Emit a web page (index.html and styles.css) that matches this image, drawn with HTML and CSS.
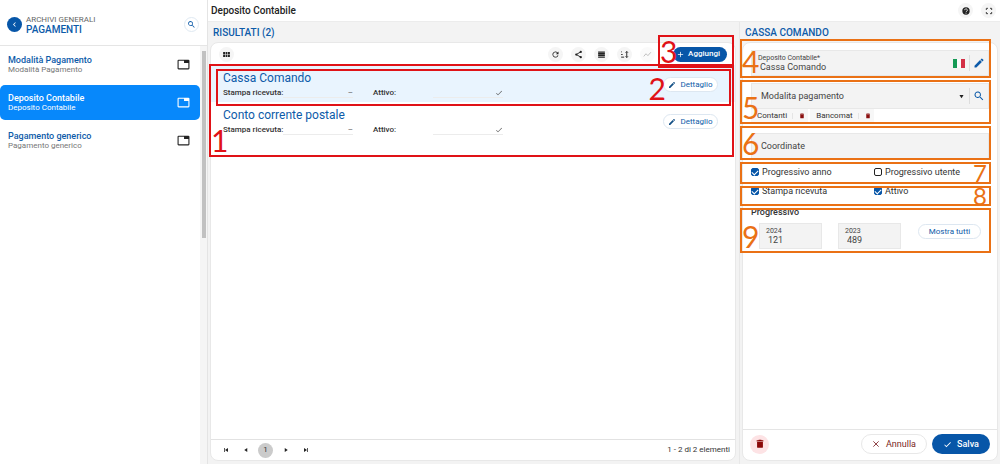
FILE: index.html
```
<!DOCTYPE html>
<html lang="it">
<head>
<meta charset="utf-8">
<title>Deposito Contabile</title>
<link rel="stylesheet" href="styles.css">
</head>
<body>
<svg class="defs" aria-hidden="true">
  <symbol id="search" viewBox="0 0 24 24"><path d="M15.5 14h-.8l-.3-.3A6.5 6.5 0 1 0 13.700 14.400l.3.300v.8l5 5 1.500-1.500zM9.500 14a4.500 4.500 0 1 1 0-9 4.500 4.500 0 0 1 0 9z"/></symbol>
  <symbol id="tab" viewBox="0 0 24 24"><path d="M21 3H3a2 2 0 0 0-2 2v14c0 1.100.9 2 2 2h18a2 2 0 0 0 2-2V5a2 2 0 0 0-2-2zm0 16H3V5h10v4h8z"/></symbol>
  <symbol id="pencil" viewBox="0 0 24 24"><path d="M3 17.250V21h3.750L17.800 9.900l-3.700-3.700zM20.700 7a1 1 0 0 0 0-1.400l-2.300-2.300a1 1 0 0 0-1.400 0l-1.900 1.800 3.800 3.800z"/></symbol>
  <symbol id="trash" viewBox="0 0 24 24"><path d="M5 7h14v12a2 2 0 0 1-2 2H7a2 2 0 0 1-2-2zM4 3h4l1-1h6l1 1h4v3H4z"/></symbol>
  <symbol id="check" viewBox="0 0 24 24"><path d="M9 16.200 4.800 12l-1.400 1.400L9 19 21 7l-1.400-1.400z"/></symbol>
</svg>
<div class="app">
  <aside class="sidebar">
    <header class="side-head">
      <button class="back" aria-label="Indietro"><svg viewBox="0 0 24 24"><path d="M15.400 7.400 14 6l-6 6 6 6 1.400-1.400L10.800 12z"/></svg></button>
      <div class="side-title"><span>ARCHIVI GENERALI</span><strong>PAGAMENTI</strong></div>
      <button class="round outlined" aria-label="Cerca"><svg><use href="#search"/></svg></button>
    </header>
    <div class="side-body">
      <nav class="menu">
        <a href="#modalita" class="item"><span><strong>Modalità Pagamento</strong><small>Modalità Pagamento</small></span><svg><use href="#tab"/></svg></a>
        <a href="#deposito" class="item active"><span><strong>Deposito Contabile</strong><small>Deposito Contabile</small></span><svg><use href="#tab"/></svg></a>
        <a href="#generico" class="item"><span><strong>Pagamento generico</strong><small>Pagamento generico</small></span><svg><use href="#tab"/></svg></a>
      </nav>
      <div class="scrollbar"><i class="thumb"></i></div>
    </div>
  </aside>
  <main class="main">
    <header class="topbar">
      <h1>Deposito Contabile</h1>
      <button class="round" aria-label="Aiuto"><svg viewBox="0 0 24 24"><circle cx="12" cy="12" r="11"/><path class="cut" d="M8 9.500a4 4 0 1 1 6.500 3.100C13 13.700 12 14 12 15.500M12 17.500v2.500"/></svg></button>
      <button class="round" aria-label="Schermo intero"><svg viewBox="0 0 24 24"><path class="line" d="M4 9V4h5M15 4h5v5M20 15v5h-5M9 20H4v-5"/></svg></button>
    </header>
    <div class="columns">
      <section class="results">
        <h2>RISULTATI (2)</h2>
        <div class="card">
          <div class="toolbar">
            <button class="round grid-view" aria-label="Griglia"><svg viewBox="0 0 24 24"><path d="M3 5h5v6H3zM9.500 5h5v6h-5zM16 5h5v6h-5zM3 12.500h5v6H3zM9.500 12.500h5v6h-5zM16 12.500h5v6h-5z"/></svg></button>
            <button class="round" aria-label="Aggiorna"><svg viewBox="0 0 24 24"><path d="M17.650 6.350A8 8 0 1 0 19.730 14h-2.080A6 6 0 1 1 12 6c1.660 0 3.140.690 4.220 1.780L13 11h7V4z"/></svg></button>
            <button class="round" aria-label="Condividi"><svg viewBox="0 0 24 24"><path class="line" d="M18 5 6 12l12 7"/><circle cx="18" cy="5" r="3"/><circle cx="6" cy="12" r="3"/><circle cx="18" cy="19" r="3"/></svg></button>
            <button class="round" aria-label="Elenco"><svg viewBox="0 0 24 24"><path d="M3 4h18v3.500H3zM3 8.300h18v3.500H3zM3 12.600h18v3.500H3zM3 17h18v3.500H3z"/></svg></button>
            <button class="round" aria-label="Ordina"><svg viewBox="0 0 24 24"><path class="line" d="M18 4v16M15 7l3-3 3 3M15 17l3 3 3-3M3 5h2M3 12h4M3 19h8"/></svg></button>
            <button class="round faded" aria-label="Grafico"><svg viewBox="0 0 24 24"><path class="line" d="m2 17 6-7 5 5 8-9"/></svg></button>
            <div class="marked">
              <button class="add"><svg viewBox="0 0 24 24"><path class="line" d="M12 3v18M3 12h18"/></svg>Aggiungi</button>
              <span class="mark mark-add">3</span>
            </div>
          </div>
          <div class="list">
            <article class="row selected">
              <div class="row-main"><h3>Cassa Comando</h3>
                <dl><dt>Stampa ricevuta:</dt><dd>–</dd><dt>Attivo:</dt><dd><svg><use href="#check"/></svg></dd></dl></div>
              <button class="pill"><svg><use href="#pencil"/></svg>Dettaglio</button>
              <span class="mark mark-row">2</span>
            </article>
            <article class="row">
              <div class="row-main"><h3>Conto corrente postale</h3>
                <dl><dt>Stampa ricevuta:</dt><dd>–</dd><dt>Attivo:</dt><dd><svg><use href="#check"/></svg></dd></dl></div>
              <button class="pill"><svg><use href="#pencil"/></svg>Dettaglio</button>
            </article>
            <span class="mark mark-list">1</span>
          </div>
          <footer class="pager">
            <button aria-label="Prima pagina"><svg viewBox="0 0 24 24"><path d="M4 4h3v16H4zM20 4v16L8 12z"/></svg></button>
            <button aria-label="Pagina precedente"><svg viewBox="0 0 24 24"><path d="M17 4v16L5 12z"/></svg></button>
            <button class="current">1</button>
            <button aria-label="Pagina successiva"><svg viewBox="0 0 24 24"><path d="M7 4v16l12-8z"/></svg></button>
            <button aria-label="Ultima pagina"><svg viewBox="0 0 24 24"><path d="M4 4v16l12-8zM17 4h3v16h-3z"/></svg></button>
            <span class="count">1 - 2 di 2 elementi</span>
          </footer>
        </div>
      </section>
      <section class="detail">
        <h2>CASSA COMANDO</h2>
        <form class="card">
          <div class="fields">
            <div class="group g-name">
              <div class="field">
                <div class="stack"><label for="name">Deposito Contabile*</label><input id="name" value="Cassa Comando"></div>
                <svg class="flag" viewBox="0 0 12 9"><path fill="#159a55" d="M0 0h4v9H0z"/><path fill="#fafafa" d="M4 0h4v9H4z"/><path fill="#d32f45" d="M8 0h4v9H8z"/></svg>
                <button type="button" class="tool" aria-label="Modifica"><svg><use href="#pencil"/></svg></button>
              </div>
              <span class="mark orange">4</span>
            </div>
            <div class="group g-mode">
              <div class="field">
                <select aria-label="Modalita pagamento"><option>Modalita pagamento</option></select>
                <svg class="caret" viewBox="0 0 24 24"><path d="M2 5h20L12 20z"/></svg>
                <button type="button" class="tool" aria-label="Cerca"><svg><use href="#search"/></svg></button>
              </div>
              <div class="chips">
                <span class="chip">Contanti<button type="button" aria-label="Rimuovi Contanti"><svg><use href="#trash"/></svg></button></span>
                <span class="chip">Bancomat<button type="button" aria-label="Rimuovi Bancomat"><svg><use href="#trash"/></svg></button></span>
              </div>
              <span class="mark orange">5</span>
            </div>
            <div class="group g-coord">
              <div class="field"><input aria-label="Coordinate" placeholder="Coordinate"></div>
              <span class="mark orange">6</span>
            </div>
            <div class="group checks">
              <label><input type="checkbox" checked>Progressivo anno</label>
              <label><input type="checkbox">Progressivo utente</label>
              <span class="mark orange right">7</span>
            </div>
            <div class="group checks flags">
              <label><input type="checkbox" checked>Stampa ricevuta</label>
              <label><input type="checkbox" checked>Attivo</label>
              <span class="mark orange right">8</span>
            </div>
            <div class="group g-prog">
              <h4>Progressivo</h4>
              <div class="years">
                <div class="field"><div class="stack"><label for="y24">2024</label><input id="y24" value="121"></div></div>
                <div class="field"><div class="stack"><label for="y23">2023</label><input id="y23" value="489"></div></div>
                <button type="button" class="pill">Mostra tutti</button>
              </div>
              <span class="mark orange">9</span>
            </div>
          </div>
          <footer class="actions">
            <button type="button" class="delete" aria-label="Elimina"><svg><use href="#trash"/></svg></button>
            <button type="button" class="cancel"><svg viewBox="0 0 24 24"><path class="line" d="m4 4 16 16M20 4 4 20"/></svg>Annulla</button>
            <button type="submit" class="save"><svg><use href="#check"/></svg>Salva</button>
          </footer>
        </form>
      </section>
    </div>
  </main>
</div>
</body>
</html>
```
FILE: styles.css
```
* { box-sizing: border-box; }
body { margin: 0; font: 9px/10px Roboto, "Liberation Sans", sans-serif; color: #333; background: #f3f3f3; }
h1, h2, h3, h4, dl, dd { margin: 0; }
button, input, select { font: inherit; color: inherit; border: 0; padding: 0; margin: 0; background: none; }
svg { display: block; width: 9px; height: 9px; fill: currentColor; flex: none; }
.defs { position: absolute; width: 0; height: 0; }
.line { fill: none; stroke: currentColor; stroke-width: 2.5; }
.cut { fill: none; stroke: #fff; stroke-width: 2.5; }

.app { display: flex; min-height: 100vh; }

.sidebar { width: 208px; flex: none; display: flex; flex-direction: column; background: #fff; border-right: 1px solid #e4e4e4; }
.side-head { display: flex; align-items: center; gap: 4px; height: 46px; padding: 4px 8px 0 7px; border-bottom: 1px solid #e5e5e5; }
.back { display: grid; place-items: center; width: 15px; height: 15px; border-radius: 50%; background: #0756a8; color: #fff; }
.side-title { flex: 1; display: flex; flex-direction: column; }
.side-title span { font-size: 8px; line-height: 9px; color: #666; }
.side-title strong { font-size: 10px; line-height: 11px; font-weight: 500; color: #0d5ba9; }
.round { display: grid; place-items: center; width: 15px; height: 15px; border-radius: 50%; background: #f5f5f5; color: #222; }
.outlined { background: #fff; border: 1px solid #dfe9f2; color: #0d5ba9; }
.side-body { flex: 1; display: flex; }
.menu { flex: 1; display: flex; flex-direction: column; gap: 3px; padding-top: 1px; }
.item { display: flex; align-items: center; justify-content: space-between; height: 35px; padding: 0 10px 0 8px; border-radius: 5px; color: #222; text-decoration: none; }
.item strong, .item small { display: block; }
.item strong { font-size: 9px; line-height: 9px; font-weight: 500; color: #0d5ba9; }
.item small { font-size: 8px; line-height: 9px; color: #777; }
.item svg { width: 13px; height: 13px; }
.item.active { background: #0788fb; color: #fff; }
.item.active strong, .item.active small { color: #fff; }
.scrollbar { width: 7px; padding: 5px 1px 0 2px; background: #f5f5f5; }
.thumb { display: block; height: 187px; background: #c1c1c1; }

.main { flex: 1; min-width: 0; display: flex; flex-direction: column; }
.topbar { display: flex; align-items: center; gap: 8px; height: 22px; padding: 0 4px 0 3px; background: #fff; border-bottom: 1px solid #ececec; }
.topbar h1 { flex: 1; font-size: 10px; font-weight: 500; color: #222; }
.topbar svg { width: 8px; height: 8px; }
.columns { flex: 1; display: grid; grid-template-columns: minmax(0, 532fr) minmax(0, 260fr); }
.results, .detail { display: flex; flex-direction: column; padding-bottom: 3px; }
.results { padding-left: 2px; padding-right: 3px; border-right: 1px solid #e8e8e8; }
.detail { padding: 0 2px 3px 2px; }
h2 { height: 20px; padding-left: 3px; font-size: 10px; line-height: 22px; font-weight: 500; color: #0d5ba9; }
.card { flex: 1; display: flex; flex-direction: column; border: 1px solid #e8e8e8; border-radius: 8px; background: #fff; }

.toolbar { display: flex; align-items: center; gap: 8px; height: 22px; padding: 0 8px; }
.toolbar .round svg { width: 9px; height: 9px; }
.grid-view { margin-right: auto; }
.faded { color: #bbb; background: #fafafa; }
.marked { position: relative; margin-left: 10px; }
.add { display: flex; align-items: center; gap: 4px; height: 15px; padding: 0 7px 0 4px; border-radius: 8px; background: #0756a8; color: #fff; font-size: 8px; font-weight: 500; }
.add svg { width: 7px; height: 7px; }

.list { position: relative; }
.row { position: relative; display: flex; justify-content: space-between; align-items: flex-start; height: 37px; padding: 6px 17px 0 12px; }
.selected { background: #e9f4fe; }
.row h3 { font-size: 12px; line-height: 14px; font-weight: 400; color: #0d5ba9; }
.row dl { display: flex; align-items: center; font-size: 8px; padding-top: 3px; }
.row dt { flex: none; width: 60px; font-weight: 500; white-space: nowrap; }
.row dd { display: flex; align-items: center; justify-content: flex-end; width: 70px; height: 10px; border-bottom: 1px solid #ececec; margin-right: 20px; color: #555; }
.row dt + dd svg { width: 8px; height: 8px; }
.pill { display: flex; align-items: center; justify-content: center; gap: 4px; height: 15px; padding: 0 6px; border: 1px solid #dde7f1; border-radius: 8px; background: #fff; color: #0d5ba9; font-size: 8px; }
.row .pill { margin-top: 6px; width: 55px; padding: 0; }
.pill svg { width: 8px; height: 8px; color: #124f85; }
.pager { display: flex; align-items: center; gap: 5px; height: 21px; margin-top: auto; padding: 0 5px 0 7px; border-top: 1px solid #e2e2e2; }
.pager button { display: grid; place-items: center; width: 15px; height: 15px; }
.pager svg { width: 6px; height: 6px; color: #222; }
.pager .current { border-radius: 50%; background: #cbcbcb; font-size: 8px; }
.count { margin-left: auto; font-size: 8px; }

.fields { display: flex; flex-direction: column; gap: 2px; margin: -4px 6px 0 -3px; }
.group { position: relative; padding: 0 2px 0 11px; }
.g-name { height: 39px; padding-top: 11px; }
.g-mode { height: 44px; padding-top: 3px; }
.g-coord { height: 34px; padding-top: 7px; }
.field { display: flex; align-items: center; height: 26px; padding: 0 3px 0 9px; border: 1px solid #e8e8e8; background: #f3f3f3; font-size: 9px; color: #444; }
.field input, .field select { flex: 1; min-width: 0; width: 100%; height: 11px; line-height: 11px; appearance: none; }
.field input::placeholder { color: #444; opacity: 1; }
.stack { flex: 1; min-width: 0; }
.stack label { display: block; font-size: 7px; line-height: 8px; }
.g-name .field { padding-left: 6px; }
.stack input { display: block; padding-left: 2px; }
.flag { width: 12px; height: 9px; margin-right: 4px; }
.tool { display: grid; place-items: center; width: 16px; height: 16px; border-left: 1px solid #ddd; padding-left: 3px; color: #0d5ba9; }
.tool svg { width: 12px; height: 12px; }
.caret { width: 5px; height: 5px; margin-right: 5px; color: #222; }
.chips { display: flex; gap: 2px; }
.chip { display: flex; align-items: center; height: 14px; padding-left: 6px; background: #f7f7f7; font-size: 8px; }
.chip button { margin-left: 5px; padding: 0 3px 0 6px; border-left: 1px solid #e5e5e5; color: #8b1010; }
.chip svg { width: 6px; height: 6px; }
.checks { display: grid; grid-template-columns: 123px 1fr; align-items: center; height: 22px; padding-bottom: 2px; }
.checks.flags { height: 20px; padding-bottom: 10px; }
.checks label { display: flex; align-items: center; gap: 3px; }
.checks input { appearance: none; display: grid; place-items: center; width: 8px; height: 8px; border: 1px solid #222; border-radius: 2px; background: #fff; }
.checks input:checked { background: #0756a8; border-color: #0756a8; }
.checks input:checked::after { content: ""; width: 5px; height: 3px; border: solid #fff; border-width: 0 0 1px 1px; transform: rotate(-45deg); margin-bottom: 1px; }
.g-prog { height: 45px; }
.g-prog h4 { font-size: 9px; line-height: 9px; font-weight: 500; }
.years { display: flex; align-items: flex-start; gap: 16px; padding: 6px 8px 0 8px; }
.years .field { width: 63px; padding: 0 6px; }
.years .pill { width: 63px; padding: 0; margin-left: auto; margin-top: 1px; }
.actions { display: flex; align-items: center; gap: 5px; height: 31px; margin-top: auto; padding: 0 7px 2px 7px; border-top: 1px solid #e5e5e5; }
.delete { display: grid; place-items: center; width: 19px; height: 19px; border-radius: 50%; background: #fde3e5; color: #8b0808; margin-right: auto; }
.delete svg { width: 10px; height: 10px; }
.cancel, .save { display: flex; align-items: center; justify-content: center; height: 20px; border-radius: 10px; font-size: 9px; }
.cancel { gap: 6px; width: 66px; border: 1px solid #e8e8e8; color: #7a1f24; }
.cancel svg { width: 8px; height: 8px; }
.save { gap: 5px; width: 58px; background: #0756a8; color: #fff; font-weight: 500; }

.mark { position: absolute; inset: 0; z-index: 1; display: flex; align-items: flex-end; border: 2px solid #e01217; color: #e01217; font: 30px/30px Lato, "Open Sans", sans-serif; pointer-events: none; }
.mark-add { inset: -12px -7px -6px -15px; align-items: center; }
.mark-row { inset: 4px 4px -4px 5px; justify-content: flex-end; align-items: center; padding-right: 63px; }
.mark-list { inset: -1px 1px -18px -2px; }
.orange { border-color: #ea7115; color: #ea7115; }
.right { justify-content: flex-end; align-items: center; padding-right: 2px; font-size: 24px; line-height: 18px; }
```
